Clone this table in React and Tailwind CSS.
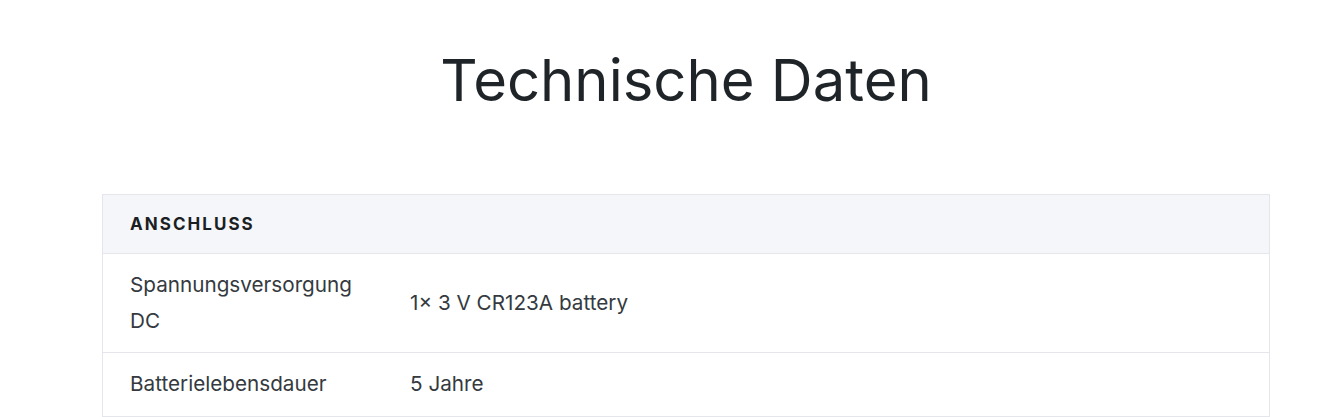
export default function App() {
  const rows = [
    ["Spannungsversorgung DC", "1× 3 V CR123A battery"],
    ["Batterielebensdauer", "5 Jahre"],
  ];
  return (
    <div className="bg-white min-h-[417px] font-['Inter',sans-serif]">
      <div className="ml-[102px] w-[1168px]">
        <h1 className="pt-[44px] text-center text-[58px] leading-[72px] font-normal text-[#1f2428]">
          Technische Daten
        </h1>
        <div className="mt-[78px] border border-[#e4e6eb]">
          <div className="h-[59px] bg-[#f5f6fa] flex items-center px-[27px] border-b border-[#e4e6eb]">
            <span className="text-[17px] font-bold tracking-[0.12em] text-[#1b1f23] leading-none">
              ANSCHLUSS
            </span>
          </div>
          {rows.map(([k, v], i) => (
            <div
              key={k}
              className={`flex items-center text-[20.7px] leading-[36px] text-[#343a40] ${
                i < rows.length - 1 ? "border-b border-[#e4e6eb] py-0" : "pb-[1px]"
              }`}
            >
              <div className="w-[280px] shrink-0 px-[27px] py-[13px]">{k}</div>
              <div className="px-[27px] py-[13px]">{v}</div>
            </div>
          ))}
        </div>
      </div>
    </div>
  );
}
